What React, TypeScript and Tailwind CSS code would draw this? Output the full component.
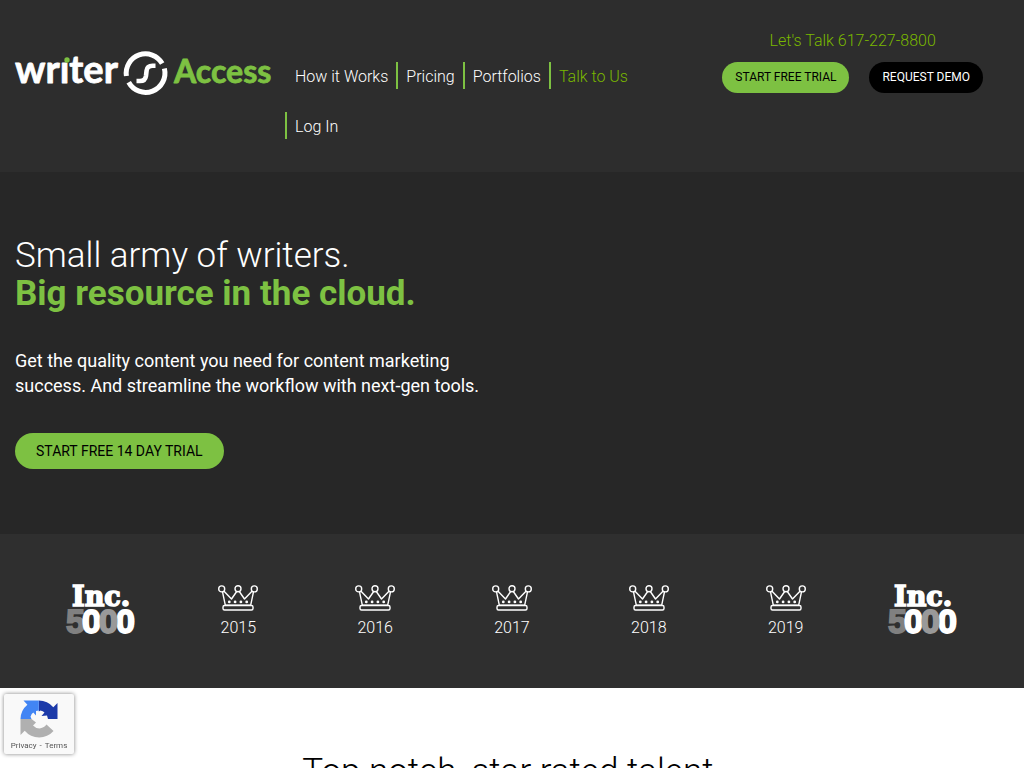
const navLinks = [
  { label: "How it Works", href: "#how", style: "border-transparent text-white" },
  { label: "Pricing", href: "#pricing", style: "border-[#7dc142] text-white" },
  { label: "Portfolios", href: "#portfolios", style: "border-[#7dc142] text-white" },
  { label: "Talk to Us", href: "#talk", style: "border-[#7dc142] text-[#7ab800]" },
  { label: "Log In", href: "#login", style: "border-[#7dc142] text-white" },
];

const years = ["2015", "2016", "2017", "2018", "2019"];

function Logo() {
  return (
    <svg viewBox="0 0 256 46" className="h-[46px] w-64 overflow-visible" role="img" aria-label="WriterAccess">
      <text x="0" y="33" fill="#fff" stroke="#fff" strokeWidth="0.8" strokeLinejoin="round" className="font-['Lato',sans-serif] text-[38px] font-bold">wr&#305;ter</text>
      <circle cx="52" cy="10" r="2.7" fill="#7dc142" />
      <g fill="none" stroke="#fff" strokeWidth="5">
        <path d="M111.4 26A19.3 19.3 0 0 1 147.2 13.5" />
        <path d="M149.4 18.5A19.3 19.3 0 0 1 113.7 32.3" />
        <path d="M140.5 15.8H137.5Q132.2 15.8 131.6 20.5L131 25.8Q130.2 31 125 31H121.5" strokeWidth="4.6" strokeLinejoin="round" />
      </g>
      <text x="159" y="33" fill="#7dc142" stroke="#7dc142" strokeWidth="0.8" strokeLinejoin="round" className="font-['Lato',sans-serif] text-[32px] font-bold">Access</text>
    </svg>
  );
}

function IncBadge() {
  return (
    <svg viewBox="0 0 70 50" className="h-[50px] w-[70px] overflow-visible" role="img" aria-label="Inc. 5000">
      <text x="6" y="21" fill="#fff" stroke="#fff" strokeWidth="1.6" className="font-['DejaVu_Serif',serif] text-[27px] font-bold">Inc.</text>
      <g className="font-['Liberation_Sans',sans-serif] text-[34px] font-bold" strokeWidth="1.8">
        <text x="0" y="48" fill="#808080" stroke="#808080">5</text>
        <text x="16" y="48" fill="#fff" stroke="#fff">0</text>
        <text x="50" y="48" fill="#fff" stroke="#fff">0</text>
        <text x="33" y="48" fill="#999" stroke="#999">0</text>
      </g>
    </svg>
  );
}

function Crown() {
  return (
    <svg viewBox="0 0 40 26" className="h-[26px] w-10" fill="none" stroke="#fff" strokeWidth="1.4" strokeLinejoin="round" aria-hidden="true">
      <circle cx="3.7" cy="3.9" r="3" />
      <circle cx="20" cy="3.7" r="3" />
      <circle cx="36.3" cy="3.9" r="3" />
      <path d="M4.5 6.8L7.3 20.2H32.7L35.5 6.8M5.8 6L13.5 14L18.7 6.5M21.3 6.5L26.5 14L34.2 6" />
      <rect x="5" y="20.5" width="30" height="4.5" rx="1.5" />
      <g fill="#fff" stroke="none">
        <circle cx="11.3" cy="16.9" r="1.4" />
        <circle cx="17.1" cy="16.9" r="1.4" />
        <circle cx="22.9" cy="16.9" r="1.4" />
        <circle cx="28.7" cy="16.9" r="1.4" />
      </g>
    </svg>
  );
}

function CaptchaBadge() {
  return (
    <aside className="fixed bottom-3.5 left-1 flex h-[60px] w-[70px] flex-col items-center gap-0.5 rounded-xs bg-[#f9f9f9] pt-1.5 shadow-[0_0_4px_#808080]">
      <svg viewBox="0 0 38 38" className="h-[38px] w-[38px]" aria-hidden="true">
        <path d="M37.5 19V3L33.3 7.2A19 19 0 0 0 18.8 0.5V11.5L20.5 10.6Q23 11 24.5 12.5L21.5 16L27 15.5L28 19Z" fill="#1c3aa9" />
        <path d="M18.8 0.5H3.5L7.4 4.8A19 19 0 0 0 0.5 19H11.5L10.5 16.8Q11.5 13.5 13.3 12.6L16 15.5V11L18.8 10.5Z" fill="#4285f4" />
        <path d="M0.5 19V35L4.7 30.8A19 19 0 0 0 33.5 31L26.5 24.6Q23.5 28.4 19.5 28.4Q15.5 28.2 13 25.4L16 22.6L11.5 19Z" fill="#b0b0b0" />
      </svg>
      <p className="flex gap-[3px] font-[Roboto,sans-serif] text-[8px] leading-[11px] whitespace-nowrap text-[#555]">
        <a href="#privacy">Privacy</a>
        <span>-</span>
        <a href="#terms">Terms</a>
      </p>
    </aside>
  );
}

export default function App() {
  return (
    <div className="min-h-screen overflow-x-hidden bg-white font-[Roboto,sans-serif] text-base text-white">
      <header className="flex items-start justify-between bg-[#2d2d2d] px-[15px] pb-[21px]">
        <div className="flex min-w-0 items-start">
          <a href="#home" className="mt-[50px] shrink-0">
            <Logo />
          </a>
          <nav className="mt-[51px] ml-3.5 flex max-w-[370px] flex-wrap font-light">
            {navLinks.map((link) => (
              <a
                key={link.label}
                href={link.href}
                className={"mt-[11px] mb-3 border-l-2 pt-0.5 pr-2 pl-2 leading-[25px] whitespace-nowrap " + link.style}
              >
                {link.label}
              </a>
            ))}
          </nav>
        </div>
        <div className="mr-[26px] flex shrink-0 flex-col items-center pt-[29px]">
          <a href="tel:6172278800" className="font-light text-[#7ab800]">Let's Talk 617-227-8800</a>
          <div className="mt-[9px] flex gap-5 text-xs leading-[31px]">
            <button type="button" className="rounded-full bg-[#7dc142] px-[13px] text-black">START FREE TRIAL</button>
            <button type="button" className="rounded-full bg-black px-[13px] text-white">REQUEST DEMO</button>
          </div>
        </div>
      </header>
      <main>
        <section className="bg-[#272727] px-[15px] pt-[65px] pb-[65px]">
          <h1 className="text-[35px] leading-[38px] font-light">
            Small army of writers.
            <strong className="block font-bold text-[#7dc142]">Big resource in the cloud.</strong>
          </h1>
          <p className="mt-[35px] max-w-[482px] text-lg leading-[25px]">
            Get the quality content you need for content marketing success. And streamline the workflow with next-gen tools.
          </p>
          <button type="button" className="mt-[35px] rounded-full bg-[#7dc142] px-[21px] text-sm leading-9 text-black">
            START FREE 14 DAY TRIAL
          </button>
        </section>
        <section className="bg-[#2f2f2f] px-[33px] pt-[51px] pb-12">
          <ul className="grid grid-cols-7 justify-items-center font-light">
            <li><IncBadge /></li>
            {years.map((year) => (
              <li key={year} className="flex flex-col items-center gap-[5px]">
                <Crown />
                <span className="leading-6">{year}</span>
              </li>
            ))}
            <li><IncBadge /></li>
          </ul>
        </section>
        <section className="px-[15px] pt-16 pb-16 text-center text-black">
          <h2 className="text-[35px] leading-10 font-light">Top notch, star rated talent.</h2>
        </section>
      </main>
      <CaptchaBadge />
    </div>
  );
}
